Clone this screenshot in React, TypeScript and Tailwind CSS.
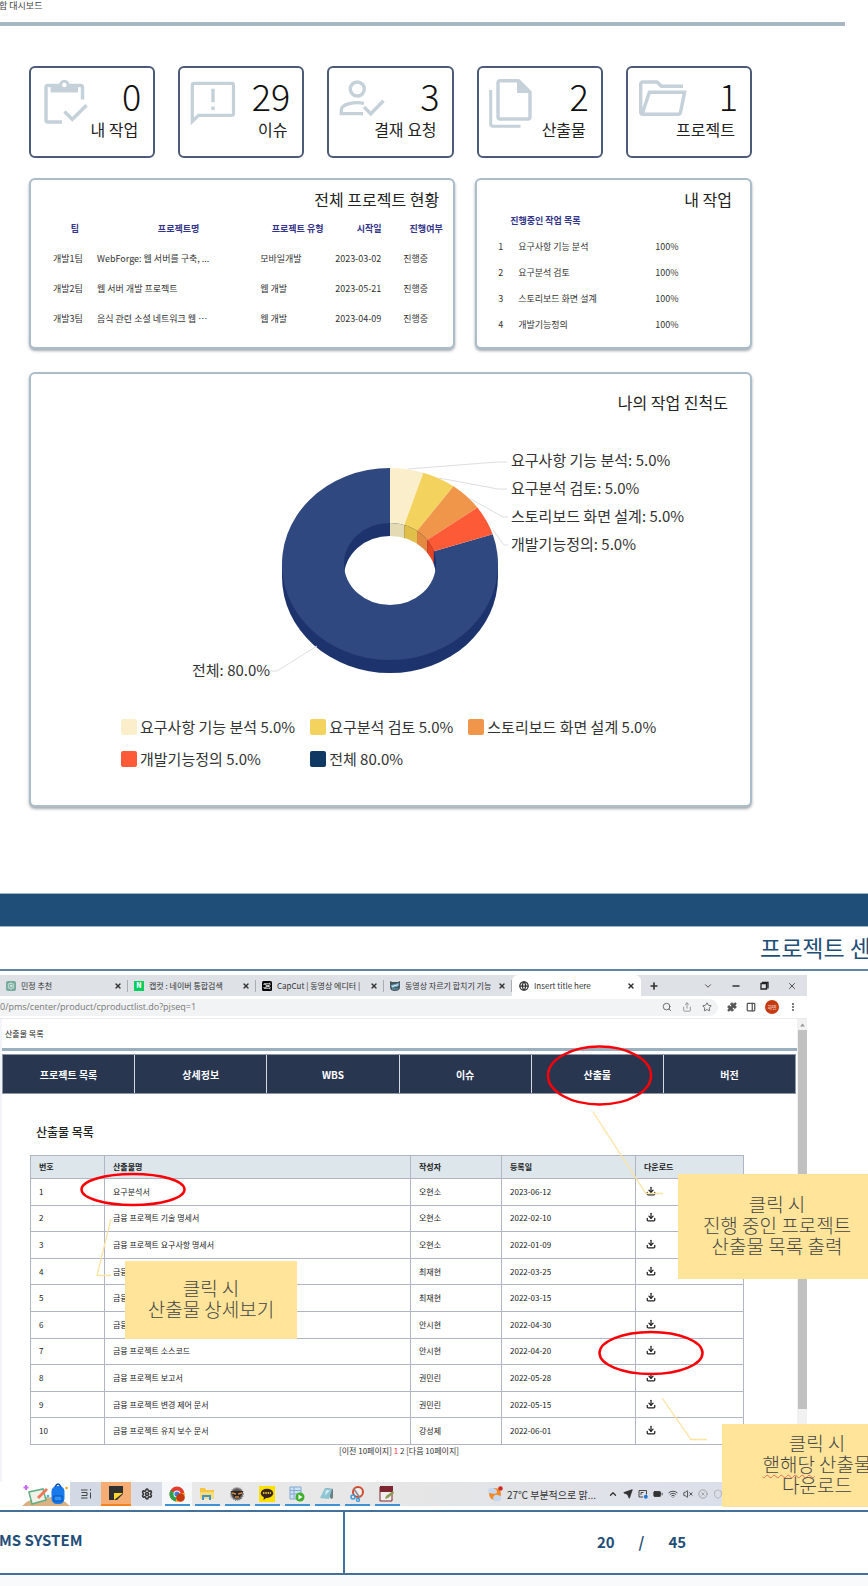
import React from "react";
import {
  Download, X, Plus, Minus, ChevronDown, ChevronUp, Search, Share, Star, Puzzle, PanelRight,
  EllipsisVertical, Settings, Send, Wifi, VolumeX, BatteryFull, CircleX, Globe, Languages, Shield,
} from "lucide-react";

const iconProps = { width: 54, height: 54, fill: "none", stroke: "currentColor", strokeWidth: 3.4 };

const ClipboardIcon = () => (
  <svg viewBox="0 0 54 54" {...iconProps}>
    <path d="M25 45H10.800q-1.800 0-1.800-1.800V10.300q0-1.800 1.800-1.800H43.700q1.800 0 1.800 1.800V22.500" />
    <path d="M13.700 7h27.300v8.500h-27.300z" fill="currentColor" stroke="none" />
    <circle cx="27.300" cy="8" r="3.800" fill="#fff" strokeWidth="3" />
    <path d="M27.500 34.500l7.800 7.800L49.500 28.300" />
  </svg>
);

const FeedbackIcon = () => (
  <svg viewBox="0 0 54 54" {...iconProps}>
    <path d="M6.300 44.500V8.200q0-1.800 1.800-1.800h37.600q1.800 0 1.800 1.800v28.400q0 1.800-1.800 1.800H12.500z" strokeWidth="3.200" />
    <path d="M27 11.700v13.600M27 29.500v3.600" />
  </svg>
);

const ApprovalIcon = () => (
  <svg viewBox="0 0 54 54" {...iconProps}>
    <circle cx="22.300" cy="12" r="7" />
    <path d="M29 26.300C20 24.500 6.300 27 6.300 33v3.600H28" />
    <path d="M29 30l6.800 6.800L48.500 23.800" />
  </svg>
);

const FilesIcon = () => (
  <svg viewBox="-4 -2 54 54" {...iconProps}>
    <path d="M11 1.8h18.500l11.500 11.500v24.700q0 2-2 2h-28q-2 0-2-2v-34.200q0-2 2-2z" />
    <path d="M28 1v13h13z" fill="currentColor" stroke="none" />
    <path d="M1.700 11v34q0 2.300 2.300 2.300h27.500" strokeWidth="3" />
  </svg>
);

const FolderIcon = () => (
  <svg viewBox="-5 -3 54 54" {...iconProps}>
    <path d="M44 6.300h-21.500l-4.500-4.300h-14q-2.300 0-2.300 2.300v27.700q0 2.300 2.300 2.300h36q1 0 1.400-1.400l4.200-20.700h-35.200l-7 21" />
  </svg>
);

const cards = [
  { icon: <ClipboardIcon />, value: 0, label: "내 작업" },
  { icon: <FeedbackIcon />, value: 29, label: "이슈" },
  { icon: <ApprovalIcon />, value: 3, label: "결재 요청" },
  { icon: <FilesIcon />, value: 2, label: "산출물" },
  { icon: <FolderIcon />, value: 1, label: "프로젝트" },
];

const projects = [
  ["개발1팀", "WebForge: 웹 서버를 구축, ...", "모바일개발", "2023-03-02", "진행중"],
  ["개발2팀", "웹 서버 개발 프로젝트", "웹 개발", "2023-05-21", "진행중"],
  ["개발3팀", "음식 관련 소셜 네트워크 웹 ⋯", "웹 개발", "2023-04-09", "진행중"],
];

const tasks = ["요구사항 기능 분석", "요구분석 검토", "스토리보드 화면 설계", "개발기능정의"];

const legend = [
  { text: "요구사항 기능 분석 5.0%", color: "bg-[#faefca]" },
  { text: "요구분석 검토 5.0%", color: "bg-[#f3d35e]" },
  { text: "스토리보드 화면 설계 5.0%", color: "bg-[#ef964b]" },
  { text: "개발기능정의 5.0%", color: "bg-[#fd5a37]" },
  { text: "전체 80.0%", color: "bg-[#0f3863]" },
];

const slices = [
  { face: "#faefca", wall: "#e4dbb5" },
  { face: "#f3d35e", wall: "#dfbf49" },
  { face: "#ef964b", wall: "#e28a41" },
  { face: "#fd5a37", wall: "#e84524" },
];

const CX = 300, CY = 134, RX = 108, RY = 96, IX = 46, IY = 41, DEPTH = 13;
const pt = (rx: number, ry: number, deg: number) => {
  const a = (deg * Math.PI) / 180;
  return [CX + rx * Math.sin(a), CY - ry * Math.cos(a)];
};

function Donut() {
  const lines = [
    "M318 39L407 32h10",
    "M349 48L408 59h9",
    "M379 68L413 87h5",
    "M403 100L414 115h4",
    "M227 216L187 241h-7",
  ];
  const labels = [
    { x: 421, y: 36, t: "요구사항 기능 분석: 5.0%" },
    { x: 421, y: 64, t: "요구분석 검토: 5.0%" },
    { x: 421, y: 92, t: "스토리보드 화면 설계: 5.0%" },
    { x: 421, y: 120, t: "개발기능정의: 5.0%" },
    { x: 102, y: 246, t: "전체: 80.0%" },
  ];
  return (
    <svg viewBox="0 0 600 260" className="h-[260px] w-[600px] shrink-0" role="img" aria-label="나의 작업 진척도">
      <defs>
        <clipPath id="hole"><ellipse cx={CX} cy={CY} rx={IX} ry={IY} /></clipPath>
      </defs>
      <path d={`M${CX - RX} ${CY}v${DEPTH}a${RX} ${RY} 0 0 0 ${RX * 2} 0v${-DEPTH}z`} fill="#1d336e" />
      <path
        d={`M${CX} ${CY}L${pt(RX, RY, 72).join(" ")}A${RX} ${RY} 0 1 1 ${CX} ${CY - RY}z`}
        fill="#304880"
      />
      {slices.map((s, i) => {
        const [x1, y1] = pt(RX, RY, i * 18), [x2, y2] = pt(RX, RY, i * 18 + 18);
        return <path key={i} d={`M${CX} ${CY}L${x1} ${y1}A${RX} ${RY} 0 0 1 ${x2} ${y2}z`} fill={s.face} />;
      })}
      <g clipPath="url(#hole)">
        <rect x={CX - IX} y={CY - IY} width={IX * 2} height={IY * 2} fill="#1d336e" />
        {slices.map((s, i) => {
          const a = pt(IX, IY, i * 18)[0], b = pt(IX, IY, i * 18 + 18)[0];
          return <rect key={i} x={a} y={CY - IY} width={b - a} height={IY} fill={s.wall} />;
        })}
        <ellipse cx={CX} cy={CY + DEPTH} rx={IX} ry={IY} fill="#fff" />
      </g>
      {lines.map((d) => <path key={d} d={d} fill="none" stroke="#dedede" strokeWidth="1" />)}
      {labels.map((l) => <text key={l.t} x={l.x} y={l.y} fontSize="15" fill="#333">{l.t}</text>)}
    </svg>
  );
}

const panel = "rounded-md border-2 border-[#aabdca] bg-white shadow-[0_2px_3px_rgba(90,100,110,0.55)]";

function Dashboard() {
  return (
    <section>
      <p className="-ml-[1px] h-3 text-[9px] leading-3 text-[#444]">합 대시보드</p>
      <div className="mt-[10px] mr-[23px] h-1 bg-[#a5b7c3]" />
      <div className="mt-10 mr-[116px] ml-[29px]">
        <div className="grid grid-cols-5 gap-[23px]">
          {cards.map((c) => (
            <div key={c.label} className="h-[92px] rounded-md border-2 border-[#4c5b78] pt-[9px] pr-3 pl-[6px]">
              <div className="flex h-[42px] items-start justify-between text-[#c4d1d9]">
                {c.icon}
                <span className="text-4xl leading-9 font-light text-[#111]">{c.value}</span>
              </div>
              <p className="relative pr-[3px] text-right text-base leading-5 whitespace-nowrap text-[#222]">{c.label}</p>
            </div>
          ))}
        </div>

        <div className="mt-5 flex gap-5">
          <div className={`${panel} h-[171px] flex-[427] pt-[9px]`}>
            <h2 className="pr-[14px] text-right text-base leading-5 text-[#222]">전체 프로젝트 현황</h2>
            <div className="pt-[5px] pr-1 pl-[22px]">
              <table className="w-full table-fixed text-[9px] leading-3 text-[#333]">
                <colgroup>
                  <col className="w-[44px]" /><col /><col className="w-[75px]" /><col className="w-[68px]" /><col className="w-[46px]" />
                </colgroup>
                <thead>
                  <tr className="h-[30px] text-[#34348a]">
                    {["팀", "프로젝트명", "프로젝트 유형", "시작일", "진행여부"].map((h) => <th key={h} className="p-0 text-center">{h}</th>)}
                  </tr>
                </thead>
                <tbody>
                  {projects.map((r) => (
                    <tr key={r[0]} className="h-[30px]">
                      {r.map((c, i) => <td key={i} className="p-0 whitespace-nowrap">{c}</td>)}
                    </tr>
                  ))}
                </tbody>
              </table>
            </div>
          </div>
          <div className={`${panel} h-[171px] flex-[276] pt-[9px]`}>
            <h2 className="pr-[18px] text-right text-base leading-5 text-[#222]">내 작업</h2>
            <h3 className="mt-[6px] pl-[33px] text-[9px] leading-3 font-bold text-[#34348a]">진행중인 작업 목록</h3>
            <ul className="mt-[7px] pl-[21px] text-[9px] leading-[26px] text-[#333]">
              {tasks.map((t, i) => (
                <li key={t} className="flex">
                  <span className="w-5">{i + 1}</span>
                  <span className="w-[137px]">{t}</span>
                  <span>100%</span>
                </li>
              ))}
            </ul>
          </div>
        </div>

        <div className={`${panel} mt-[23px] h-[435px] pt-[18px]`}>
          <h2 className="pr-[22px] text-right text-base leading-5 text-[#222]">나의 작업 진척도</h2>
          <div className="mt-[18px] flex justify-center pr-[2px]"><Donut /></div>
          <ul className="mt-[25px] ml-[90px] grid w-fit grid-cols-[auto_auto_auto] gap-x-[15px] gap-y-2 text-[15px] leading-6 text-[#333]">
            {legend.map((l) => (
              <li key={l.text} className="flex items-center gap-[3px] whitespace-nowrap">
                <span className={`size-4 rounded-xs ${l.color}`} />
                {l.text}
              </li>
            ))}
          </ul>
        </div>
      </div>
    </section>
  );
}

const tabs = [
  { title: "민정 추천", icon: <span className="flex size-[10px] shrink-0 items-center justify-center rounded-xs bg-[#75a99b]"><Settings size={8} color="#fff" /></span> },
  { title: "캡컷 : 네이버 통합검색", icon: <span className="flex size-[10px] shrink-0 items-center justify-center bg-[#03cf5d] text-[7px] font-black text-white">N</span> },
  { title: "CapCut | 동영상 에디터 |", icon: <svg className="size-[10px] shrink-0" viewBox="0 0 10 10"><rect width="10" height="10" rx="1.5" /><path d="M2 4V2.800h4.500L8.500 2M2 6v1.200h4.500L8.500 8M3 3.500L8.500 6.500M3 6.500L8.500 3.500" fill="none" stroke="#fff" strokeWidth=".9" /></svg> },
  { title: "동영상 자르기 합치기 기능", icon: <svg className="size-[10px] shrink-0" viewBox="0 0 10 10"><path d="M0 0l2 1h6l2-1v6q0 4-5 4t-5-4z" fill="#48545c" /><path d="M1 4.500l8-2-1 2.500-6 1.500zM2 8h6" fill="#dfe8ea" stroke="#62a5c4" /></svg> },
];

const rows = [
  ["요구분석서", "오현소", "2023-06-12"],
  ["금융 프로젝트 기술 명세서", "오현소", "2022-02-10"],
  ["금융 프로젝트 요구사항 명세서", "오현소", "2022-01-09"],
  ["금융", "최재현", "2022-03-25"],
  ["금융", "최재현", "2022-03-15"],
  ["금융", "안시현", "2022-04-30"],
  ["금융 프로젝트 소스코드", "안시현", "2022-04-20"],
  ["금융 프로젝트 보고서", "권민린", "2022-05-28"],
  ["금융 프로젝트 변경 제어 문서", "권민린", "2022-05-15"],
  ["금융 프로젝트 유지 보수 문서", "강성제", "2022-06-01"],
];

function BrowserChrome() {
  return (
    <>
      <div className="flex h-[21px] items-stretch bg-[#dee1e6] text-[8px] text-[#333]">
        {tabs.map((t) => (
          <div key={t.title} className="flex w-32 items-center gap-[5px] px-[6px]">
            {t.icon}
            <span className="flex-1 overflow-hidden whitespace-nowrap">{t.title}</span>
            <button aria-label="닫기"><X size={8} strokeWidth={4} /></button>
            <span className="-mr-[6px] h-3 w-px bg-[#a9adb3]" />
          </div>
        ))}
        <div className="flex w-[129px] items-center gap-[5px] rounded-t-md bg-white pr-[6px] pl-[7px]">
          <Globe size={10} strokeWidth={3} className="shrink-0" />
          <span className="flex-1 whitespace-nowrap">Insert title here</span>
          <button aria-label="닫기"><X size={8} strokeWidth={4} /></button>
        </div>
        <div className="flex flex-1 items-center justify-between pr-[10px] pl-[8px]">
          <button aria-label="새 탭"><Plus size={10} strokeWidth={4} /></button>
          <div className="flex gap-[18px]">
            <ChevronDown size={10} /><Minus size={10} strokeWidth={4} />
            <svg width="10" height="10" viewBox="0 0 10 10"><path d="M2 2.500h5.500v5.500h-5.500zM3 1.500h6v6" fill="none" stroke="#222" strokeWidth="1.300" /></svg>
            <X size={10} />
          </div>
        </div>
      </div>
      <div className="flex h-[23px] items-center border-b border-[#e8eaed] bg-white text-[#555]">
        <label className="flex h-[17px] flex-1 items-center gap-[10px] rounded-r-full bg-[#f1f3f4] pr-[6px]">
          <input aria-label="주소" readOnly defaultValue="0/pms/center/product/cproductlist.do?pjseq=1" className="min-w-0 flex-1 bg-transparent font-['Open_Sans','Noto_Sans',sans-serif] text-[9px] text-[#777] outline-none" />
          <Search size={10} /><Share size={10} color="#888" /><Star size={10} />
        </label>
        <div className="flex items-center gap-[9px] px-[9px]">
          <Puzzle size={10} fill="#555" /><PanelRight size={10} strokeWidth={3} />
          <span className="flex size-[14px] items-center justify-center rounded-full bg-[#c5390f] text-[5px] text-white">하민</span>
          <EllipsisVertical size={10} strokeWidth={3} />
        </div>
      </div>
    </>
  );
}

const taskIcons = [
  <svg key="c" viewBox="0 0 16 16" className="size-4"><circle cx="8" cy="8" r="7.500" fill="#e33b2e" /><path d="M8 8L1.500 4.200A7.500 7.500 0 0 0 7 15.400z" fill="#2fa24c" /><path d="M8 8l-1 7.400a7.500 7.500 0 0 0 8.500-8.400z" fill="#fbc116" /><circle cx="8" cy="8" r="3.500" fill="#fff" /><circle cx="8" cy="8" r="2.600" fill="#3e7de0" /><circle cx="11.500" cy="11.500" r="4.300" fill="#c5390f" /></svg>,
  <svg key="f" viewBox="0 0 16 16" className="size-4"><path d="M1 2h5l1 2h8v9H1z" fill="#f6c544" /><path d="M1 6h14v7H1z" fill="#fbdb78" /><path d="M3 14V9h9v5h-2v-3H5v3z" fill="#3f92d2" /></svg>,
  <svg key="o" viewBox="0 0 16 16" className="size-4"><circle cx="8" cy="8" r="6" fill="#555" stroke="#888" strokeWidth="2" strokeDasharray="1 1" /><path d="M2 5l12 0-1 3-3 4H6L3 8z" fill="#2a2320" /><path d="M3 7l4 1M13 7l-4 1M6 11h4" stroke="#d98a44" strokeWidth="1.500" /></svg>,
  <svg key="k" viewBox="0 0 16 16" className="size-4"><rect width="16" height="16" fill="#fae100" /><ellipse cx="8" cy="7.300" rx="6.200" ry="4.600" fill="#3a2320" /><path d="M5 10l-.5 4 4-3z" fill="#3a2320" /><path d="M4 7h8" stroke="#d6bd20" strokeWidth="2" strokeDasharray="1.500 .8" /></svg>,
  <svg key="s" viewBox="0 0 16 16" className="size-4"><path d="M1 1h11v12H1z" fill="#cfe2f5" stroke="#81a9d2" /><path d="M1 4.500h11M1 8h11M5 1v12" stroke="#81a9d2" /><circle cx="11" cy="11" r="4.500" fill="#3fb02c" /><path d="M9.500 8.500l4 2.500-4 2.500z" fill="#fff" /></svg>,
  <svg key="n" viewBox="0 0 16 16" className="size-4"><path d="M6 2l8 1v9l-2 1z" fill="#6a8084" /><path d="M6 2l7 1-3 10-9-1z" fill="#8dc5d3" /><path d="M7 4l4 .5-5 5z" fill="#d2edf1" /></svg>,
  <svg key="p" viewBox="0 0 16 16" className="size-4"><ellipse cx="9" cy="6" rx="5" ry="5" fill="#eee" stroke="#d1492f" strokeWidth="2" /><path d="M5 3l6 9" stroke="#888" strokeWidth="1.500" /><circle cx="4" cy="11" r="2" fill="none" stroke="#3b9bd8" strokeWidth="1.500" /><circle cx="9" cy="14" r="1.500" fill="none" stroke="#3b9bd8" strokeWidth="1.300" /></svg>,
  <svg key="w" viewBox="0 0 16 16" className="size-4"><path d="M1 1h12v14H1z" fill="#f3eeee" stroke="#7c2631" /><path d="M1 0h13v6H1z" fill="#7c2631" /><path d="M6 13l1-3 7-5 1 2-6 5z" fill="#8b9a55" /></svg>,
];

function Taskbar() {
  return (
    <div className="flex h-6 items-stretch bg-linear-to-r from-[#ececec] via-[#e6e6e6] to-[#d8ddea]">
      <div className="flex w-[70px] justify-end bg-white">
        <svg viewBox="0 0 48 24" className="h-6 w-12">
          <path d="M0 24q8-9 24-9t24 9z" fill="#d9b183" />
          <path d="M7 10l14-3 3 11-14 4z" fill="#f0f2e8" stroke="#5fae86" strokeWidth="1.500" />
          <path d="M15 15l9-9 2 2-9 9z" fill="#f0785a" />
          <rect x="29.500" y="4" width="13" height="18" rx="5.500" fill="#1779ea" />
          <path d="M33 5q3-6 6 0" fill="none" stroke="#0b4fae" strokeWidth="1.500" />
          <path d="M32 14h8v5h-8z" fill="#2b93fb" stroke="#0b4fae" />
          <path d="M4 3v5M1.500 5.500h5" stroke="#c76bea" strokeWidth="2" />
          <circle cx="26" cy="14" r="1.300" fill="#31b8ec" /><circle cx="44.500" cy="6" r="1.300" fill="#f8a51b" />
        </svg>
      </div>
      <div className="flex w-[31px] items-center justify-center bg-[#d3d9e4]">
        <svg viewBox="0 0 12 12" className="size-3" fill="none" stroke="#444"><path d="M1 2h6.500M1 10h6.500M1.500 4.500h5.500v3h-5.500M10.500 1v1.500M10.500 4.500v6" /></svg>
      </div>
      <div className="flex w-[30px] items-center justify-center border-b-2 border-[#f58220] bg-[#f6ad74]">
        <svg viewBox="0 0 14 14" className="size-[14px]"><path d="M0 0h14v8l-6 6H0z" fill="#303030" /><path d="M5 7h9l-9 7z" fill="#ffd52e" /></svg>
      </div>
      <div className="flex w-[31px] items-center justify-center bg-[#d9dde8] text-[#333]"><Settings size={12} strokeWidth={3} /></div>
      <div className="flex">
        {taskIcons.map((ic, i) => (
          <div key={i} className={i === 0 ? "flex w-[30px] flex-col items-center bg-[#f7f8f9] pt-1" : "flex w-[30px] flex-col items-center pt-1"}>
            {ic}
            <span className="mt-auto h-[2px] w-[25px] bg-[#3d92d6]" />
          </div>
        ))}
      </div>
      <div className="ml-auto flex items-center pr-[84px] text-[#333]">
        <svg viewBox="0 0 16 16" className="size-4"><circle cx="8" cy="8" r="6" fill="#f08a26" /><path d="M1 5q1-4 5-3t4 4-8 1zM6 12q1-4 5-3t3 4-7 2z" fill="#c5d8f0" /><circle cx="13.500" cy="2.500" r="2.300" fill="#d2281e" /></svg>
        <span className="ml-1 text-[10px] whitespace-nowrap">27℃ 부분적으로 맑...</span>
        <span className="ml-3 flex items-center gap-[5px]">
          <ChevronUp size={10} strokeWidth={3} />
          <Send size={10} fill="#333" />
          <svg width="10" height="10" viewBox="0 0 10 10" fill="none" stroke="#444"><path d="M1 1.500h7.500v4M1 1.500v6.500h4M3 6v-2.500h2.500" /><circle cx="7.800" cy="7.800" r="2" fill="#1f78d1" stroke="none" /></svg>
          <BatteryFull size={10} fill="#333" /><Wifi size={10} /><VolumeX size={10} /><CircleX size={10} color="#999" />
          <Shield size={10} color="#aaa" />
        </span>
      </div>
    </div>
  );
}

const note = "absolute flex items-center justify-center bg-[#ffe499] pb-[5px] text-center text-[19px] leading-[21px] font-light whitespace-nowrap text-[#444]";

function Callouts() {
  return (
    <>
      <svg className="pointer-events-none absolute inset-0 h-full w-full" fill="none">
        <g stroke="#fbe3a0" strokeWidth="1.300">
          <path d="M593 137L646 218.500h17" />
          <path d="M111 244L97 300.500h14" />
          <path d="M662 423L691 464.500h16" />
        </g>
        <g stroke="#fb0007" strokeWidth="2.500">
          <ellipse cx="599.500" cy="100.500" rx="51.500" ry="29" />
          <ellipse cx="133" cy="214.500" rx="51.500" ry="15.500" />
          <ellipse cx="651" cy="378" rx="51.500" ry="21" />
        </g>
      </svg>
      <div className={`${note} top-[286px] left-[125px] h-[78px] w-[172px]`}>
        <p>클릭 시<br />산출물 상세보기</p>
      </div>
      <div className={`${note} top-[199px] left-[678px] h-[105px] w-[198px]`}>
        <p>클릭 시<br />진행 중인 프로젝트<br />산출물 목록 출력</p>
      </div>
      <div className={`${note} top-[449px] left-[722px] h-[83px] w-[190px]`}>
        <p>클릭 시<br /><span className="underline decoration-[#ef6a5a] decoration-wavy decoration-1 underline-offset-2">핻해당</span> 산출물<br />다운로드</p>
      </div>
    </>
  );
}

function ProductSlide() {
  return (
    <section>
      <div className="mt-[86px] h-[34px] border-y border-[#9fb6ca] bg-[#1f4e79]" />
      <header className="flex h-[44px] items-center justify-end border-b-2 border-[#6285a6] pb-[3px]">
        <h1 className="-mr-[3px] text-[23px] leading-8 whitespace-nowrap text-[#1f4e79]">프로젝트 센</h1>
      </header>
      <div className="relative mt-1">
        <div className="mr-[61px]">
          <BrowserChrome />
          <div className="flex h-[463px] border-l-2 border-[#f3f4fa] bg-white">
            <div className="flex-1">
              <p className="h-[29px] pl-[3px] text-[8px] leading-[30px] text-[#222]">산출물 목록</p>
              <div className="h-[3px] bg-[#9bb0be]" />
              <nav className="mt-[3px] mr-px grid h-10 grid-cols-6 gap-px border border-[#8d96a6] bg-[#d5dae2]">
                {["프로젝트 목록", "상세정보", "WBS", "이슈", "산출물", "버전"].map((n) => (
                  <a key={n} href="#" className="flex items-center justify-center bg-[#293650] text-[10px] font-bold text-white">{n}</a>
                ))}
              </nav>
              <div className="pr-[53px] pl-7">
                <h2 className="mt-[28px] pl-[6px] text-xs leading-5 font-medium text-[#222]">산출물 목록</h2>
                <table className="mt-[13px] h-[290px] w-full table-fixed border-collapse text-left text-[8px] leading-3 text-[#222]">
                  <colgroup>
                    <col className="w-[74px]" /><col /><col className="w-[91px]" /><col className="w-[134px]" /><col className="w-[108px]" />
                  </colgroup>
                  <thead>
                    <tr className="h-[23px] bg-[#dde6eb]">
                      {["번호", "산출물명", "작성자", "등록일", "다운로드"].map((h) => (
                        <th key={h} className="border border-[#b0b4c3] py-0 pl-2">{h}</th>
                      ))}
                    </tr>
                  </thead>
                  <tbody>
                    {rows.map((r, i) => (
                      <tr key={i}>
                        <td className="border border-[#b0b4c3] py-0 pl-2">{i + 1}</td>
                        {r.map((c, j) => <td key={j} className="border border-[#b0b4c3] py-0 pl-2">{c}</td>)}
                        <td className="border border-[#b0b4c3] py-0 pl-[10px]">
                          <button aria-label="다운로드" className="block pb-[2px]"><Download size={10} strokeWidth={3} /></button>
                        </td>
                      </tr>
                    ))}
                  </tbody>
                </table>
                <p className="pl-[24px] text-center text-[8px] leading-3 text-[#333]">[이전 10페이지] <span className="text-[#f33]">1</span> 2 [다음 10페이지]</p>
              </div>
            </div>
            <div className="flex w-[10px] flex-col items-center bg-[#f1f1f1]">
              <span className="flex h-[11px] items-center"><svg width="5" height="4" viewBox="0 0 5 4"><path d="M0 3.500L2.500.5 5 3.500z" fill="#999" /></svg></span>
              <span className="h-[379px] w-[9px] bg-[#c1c1c1]" />
            </div>
          </div>
          <Taskbar />
        </div>
        <Callouts />
      </div>
      <footer className="mt-[4px] flex h-[65px] border-y-2 border-[#45709a] text-[15px] font-bold text-[#1f4e79]">
        <div className="flex w-[345px] items-center border-r-2 border-[#45709a] pb-1"><span className="-ml-px">MS SYSTEM</span></div>
        <div className="flex flex-1 items-center justify-center"><p className="flex gap-6 pl-[70px]"><span>20</span><span>/</span><span>45</span></p></div>
      </footer>
      <div className="h-[11px] bg-[#f9fafc]" />
    </section>
  );
}

export default function App() {
  return (
    <main className="overflow-hidden bg-white font-['Noto_Sans_CJK_KR','Noto_Sans',sans-serif]">
      <Dashboard />
      <ProductSlide />
    </main>
  );
}
